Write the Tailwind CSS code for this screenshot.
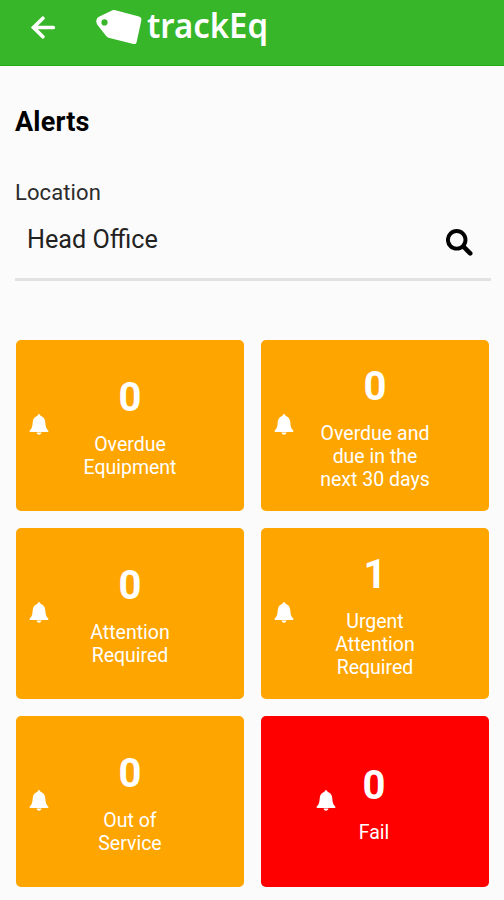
<!DOCTYPE html>
<html lang="en">
<head>
  <meta charset="UTF-8" />
  <meta name="viewport" content="width=device-width, initial-scale=1.0" />
  <title>trackEq - Alerts</title>
  <script src="https://cdn.jsdelivr.net/npm/@tailwindcss/browser@4"></script>
</head>
<body class="bg-[#fbfbfb] text-black font-[Roboto,sans-serif] h-[900px] overflow-hidden">
  <svg class="hidden">
    <symbol id="bell" viewBox="0 0 20 22">
      <path d="M10 .3c.9 0 1.400.6 1.500 1.500 2.800.8 4.600 3.300 4.800 6.500.2 4.200.8 6.300 3 8.200v1.400H.7v-1.400c2.200-1.900 2.800-4 3-8.200.2-3.200 2-5.700 4.800-6.500C8.600.9 9.100.3 10 .3zM7.600 18.600h4.800c0 1.300-1.100 2.200-2.400 2.200s-2.400-.9-2.400-2.200z" fill="currentColor" />
    </symbol>
  </svg>

  <header class="h-[66px] bg-[#38b62a] border-b border-[#20ac12] text-white flex items-start">
    <svg class="w-7 h-7 ml-[29px] mt-[14px]" viewBox="0 0 28 28" fill="none" stroke="currentColor" stroke-width="3.7" stroke-linecap="round">
      <path d="M13.900 4.200L4.500 13.500l9.400 9.300M5 13.500h19.300" stroke-linejoin="miter" />
    </svg>
    <svg class="w-[180px] h-[60px] ml-[38px]" viewBox="95 0 180 60">
      <path d="M112.500 10.200Q113.500 9.800 114.500 10L139 16.500Q142 17.500 141.300 20.500L136.600 42.200Q136 44.600 133.500 44L108.500 37.700Q107 37.200 106 35.800L97.500 25Q95.200 21.500 97.200 18.200Q98 17.200 99.500 16.500zM104.500 19.300a3.100 3.100 0 1 0 .01 6.200a3.100 3.100 0 1 0-.01-6.200z" fill="white" fill-rule="evenodd" />
      <text x="147" y="38.300" textLength="121" lengthAdjust="spacingAndGlyphs" font-family="Noto Sans, sans-serif" font-weight="600" font-size="35" fill="white">trackEq</text>
    </svg>
  </header>

  <main class="pl-[15px] pr-[13px]">
    <h1 class="mt-[40px] text-[27px] leading-8 font-bold tracking-[0.2px]">Alerts</h1>
    <label for="location" class="block mt-[41px] text-[22px] leading-7 tracking-[0.1px] text-[#2b2b2b]">Location</label>
    <div class="h-[74px] border-b-3 border-[#e2e2e2] flex items-start justify-between pl-3 pr-[17px]">
      <div id="location" class="mt-[17px] text-[25.200px] leading-8 text-[#222]">Head Office</div>
      <svg class="w-[28px] h-[28px] mt-[22px]" viewBox="0 0 28 28" fill="none" stroke="currentColor">
        <circle cx="10.700" cy="10.800" r="8.800" stroke-width="3.900" />
        <path d="M17.500 17.700l6.700 6.700" stroke-width="4.600" stroke-linecap="round" />
      </svg>
    </div>

    <div class="mt-[58.500px] pl-px pr-[2px] grid grid-cols-2 auto-rows-[171px] gap-[17px] text-white text-center">
      <div class="bg-[#ffa500] rounded-[5px] grid grid-cols-[46px_1fr_46px] items-center">
        <svg class="w-5 h-[22px] justify-self-center"><use href="#bell" /></svg>
        <div class="pt-[3px]">
          <div class="text-[40px] leading-[47px] font-bold">0</div>
          <div class="mt-3 text-[19.500px] leading-[23px]">Overdue<br>Equipment</div>
        </div>
      </div>
      <div class="bg-[#ffa500] rounded-[5px] grid grid-cols-[46px_1fr_46px] items-center">
        <svg class="w-5 h-[22px] justify-self-center"><use href="#bell" /></svg>
        <div class="pt-[3px]">
          <div class="text-[40px] leading-[47px] font-bold">0</div>
          <div class="mt-3 text-[19.500px] leading-[23px]">Overdue and<br>due in the<br>next 30 days</div>
        </div>
      </div>
      <div class="bg-[#ffa500] rounded-[5px] grid grid-cols-[46px_1fr_46px] items-center">
        <svg class="w-5 h-[22px] justify-self-center"><use href="#bell" /></svg>
        <div class="pt-[3px]">
          <div class="text-[40px] leading-[47px] font-bold">0</div>
          <div class="mt-3 text-[19.500px] leading-[23px]">Attention<br>Required</div>
        </div>
      </div>
      <div class="bg-[#ffa500] rounded-[5px] grid grid-cols-[46px_1fr_46px] items-center">
        <svg class="w-5 h-[22px] justify-self-center"><use href="#bell" /></svg>
        <div class="pt-[3px]">
          <div class="text-[40px] leading-[47px] font-bold">1</div>
          <div class="mt-3 text-[19.500px] leading-[23px]">Urgent<br>Attention<br>Required</div>
        </div>
      </div>
      <div class="bg-[#ffa500] rounded-[5px] grid grid-cols-[46px_1fr_46px] items-center">
        <svg class="w-5 h-[22px] justify-self-center"><use href="#bell" /></svg>
        <div class="pt-[3px]">
          <div class="text-[40px] leading-[47px] font-bold">0</div>
          <div class="mt-3 text-[19.500px] leading-[23px]">Out of<br>Service</div>
        </div>
      </div>
      <div class="bg-[#ff0000] rounded-[5px] grid grid-cols-[75px_1fr_77px] items-center">
        <svg class="w-5 h-[22px] justify-self-end"><use href="#bell" /></svg>
        <div class="pt-[3px]">
          <div class="text-[40px] leading-[47px] font-bold">0</div>
          <div class="mt-3 text-[19.500px] leading-[23px]">Fail</div>
        </div>
      </div>
    </div>
  </main>
</body>
</html>
